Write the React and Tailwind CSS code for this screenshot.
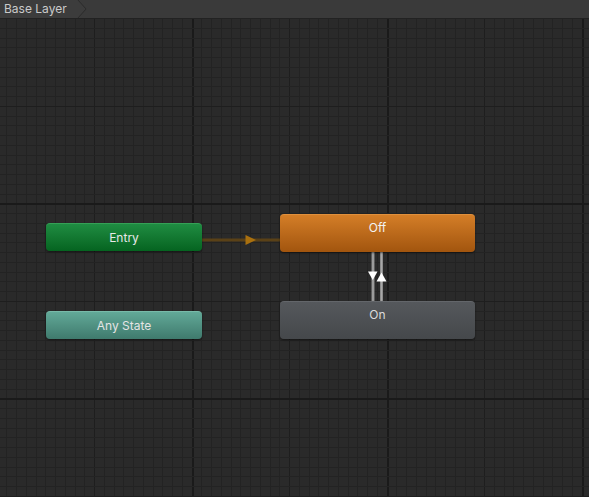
import React from "react";

const W = 589;
const H = 497;
const TOP = 19;

function Grid() {
  const lines = [];
  for (let i = 0; i < 62; i++) {
    const x = 6.45 + 9.75 * i;
    if (x > W) break;
    let color = "#232323";
    let w = 1;
    if (i % 20 === 19) { color = "#1a1a1a"; w = 2; }
    else if (i % 10 === 9) { color = "#1e1e1e"; w = 1; }
    const rx = Math.round(x);
    lines.push(<rect key={"v" + i} x={rx} y={0} width={w} height={H} fill={color} />);
  }
  for (let j = 0; j < 60; j++) {
    const y = 8.3 + 9.75 * j - TOP;
    if (y > H) break;
    if (y < -2) continue;
    let color = "#232323";
    let h = 1;
    if (j % 20 === 0) { color = "#1a1a1a"; h = 2; }
    else if (j % 10 === 0) { color = "#1e1e1e"; h = 1; }
    const ry = Math.round(y);
    lines.push(<rect key={"h" + j} x={0} y={ry} width={W} height={h} fill={color} />);
  }
  return (
    <svg className="absolute inset-0" width={W} height={H} viewBox={`0 0 ${W} ${H}`}>
      <rect x="0" y="0" width={W} height={H} fill="#2a2a2a" />
      {lines}
    </svg>
  );
}

function Transitions() {
  return (
    <svg className="absolute inset-0" width={W} height={H} viewBox={`0 0 ${W} ${H}`}>
      {/* Entry -> Off */}
      <rect x="202" y={240 - TOP - 1.5} width="78" height="3" fill="#5a4117" />
      <polygon points={`245.5,${235 - TOP} 256,${240 - TOP} 245.5,${245 - TOP}`} fill="#a9700f" />
      {/* Off <-> On */}
      <rect x="371.5" y={252 - TOP} width="3" height="49" fill="#8c8c8c" />
      <rect x="372.5" y={252 - TOP} width="1" height="49" fill="#a8a8a8" />
      <rect x="380" y={252 - TOP} width="3" height="49" fill="#8c8c8c" />
      <rect x="381" y={252 - TOP} width="1" height="49" fill="#a8a8a8" />
      <polygon points={`368,${271.5 - TOP} 377.5,${271.5 - TOP} 372.75,${280 - TOP}`} fill="#ffffff" />
      <polygon points={`376.5,${281.5 - TOP} 386.5,${281.5 - TOP} 381.5,${272.5 - TOP}`} fill="#ffffff" />
    </svg>
  );
}

function Node({ left, top, width, height, bg, label, textClass, center }) {
  return (
    <div
      className={`absolute flex justify-center rounded-[4px] shadow-[0_1px_2px_rgba(0,0,0,0.5)] ${bg} ${center ? "items-center" : "items-start pt-[5px]"}`}
      style={{ left, top: top - TOP, width, height }}
    >
      <span className={`text-[12px] leading-[16px] ${textClass}`}>{label}</span>
    </div>
  );
}

export default function App() {
  return (
    <div
      className="relative flex flex-col overflow-hidden bg-[#2a2a2a]"
      style={{ width: W, height: H, fontFamily: "Inter, 'Noto Sans', sans-serif" }}
    >
      <div className="relative z-10 flex h-[19px] shrink-0 items-stretch border-b border-[#222222] bg-[#3a3a3a]">
        <div className="flex items-center bg-[#3c3c3c] pl-[4px] pr-[10px] text-[12px] leading-none text-[#cacaca]">
          Base Layer
        </div>
        <svg width="11" height="18" viewBox="0 0 11 18" className="block">
          <polygon points="0,0 1,0 9,9 1,18 0,18" fill="#3c3c3c" />
          <polyline points="1,0 9,9 1,18" fill="none" stroke="#2c2c2c" strokeWidth="1" />
        </svg>
      </div>
      <div className="relative flex-1">
        <Grid />
        <Transitions />
        <Node left={46} top={223} width={156} height={28} center label="Entry"
          bg="bg-gradient-to-b from-[#1f8c42] to-[#056420] border-t border-[#35a056]" textClass="text-[#e8e8e8]" />
        <Node left={46} top={311} width={156} height={28} center label="Any State"
          bg="bg-gradient-to-b from-[#62a998] to-[#3f7a6d] border-t border-[#78baa9]" textClass="text-[#e4e4e4]" />
        <Node left={280} top={214} width={195} height={38} label="Off"
          bg="bg-gradient-to-b from-[#d47e27] to-[#a2550e] border-t border-[#e0903c]" textClass="text-[#f2f2f2]" />
        <Node left={280} top={301} width={195} height={38} label="On"
          bg="bg-gradient-to-b from-[#55585c] to-[#45484b] border-t border-[#63666a]" textClass="text-[#dcdcdc]" />
      </div>
    </div>
  );
}
